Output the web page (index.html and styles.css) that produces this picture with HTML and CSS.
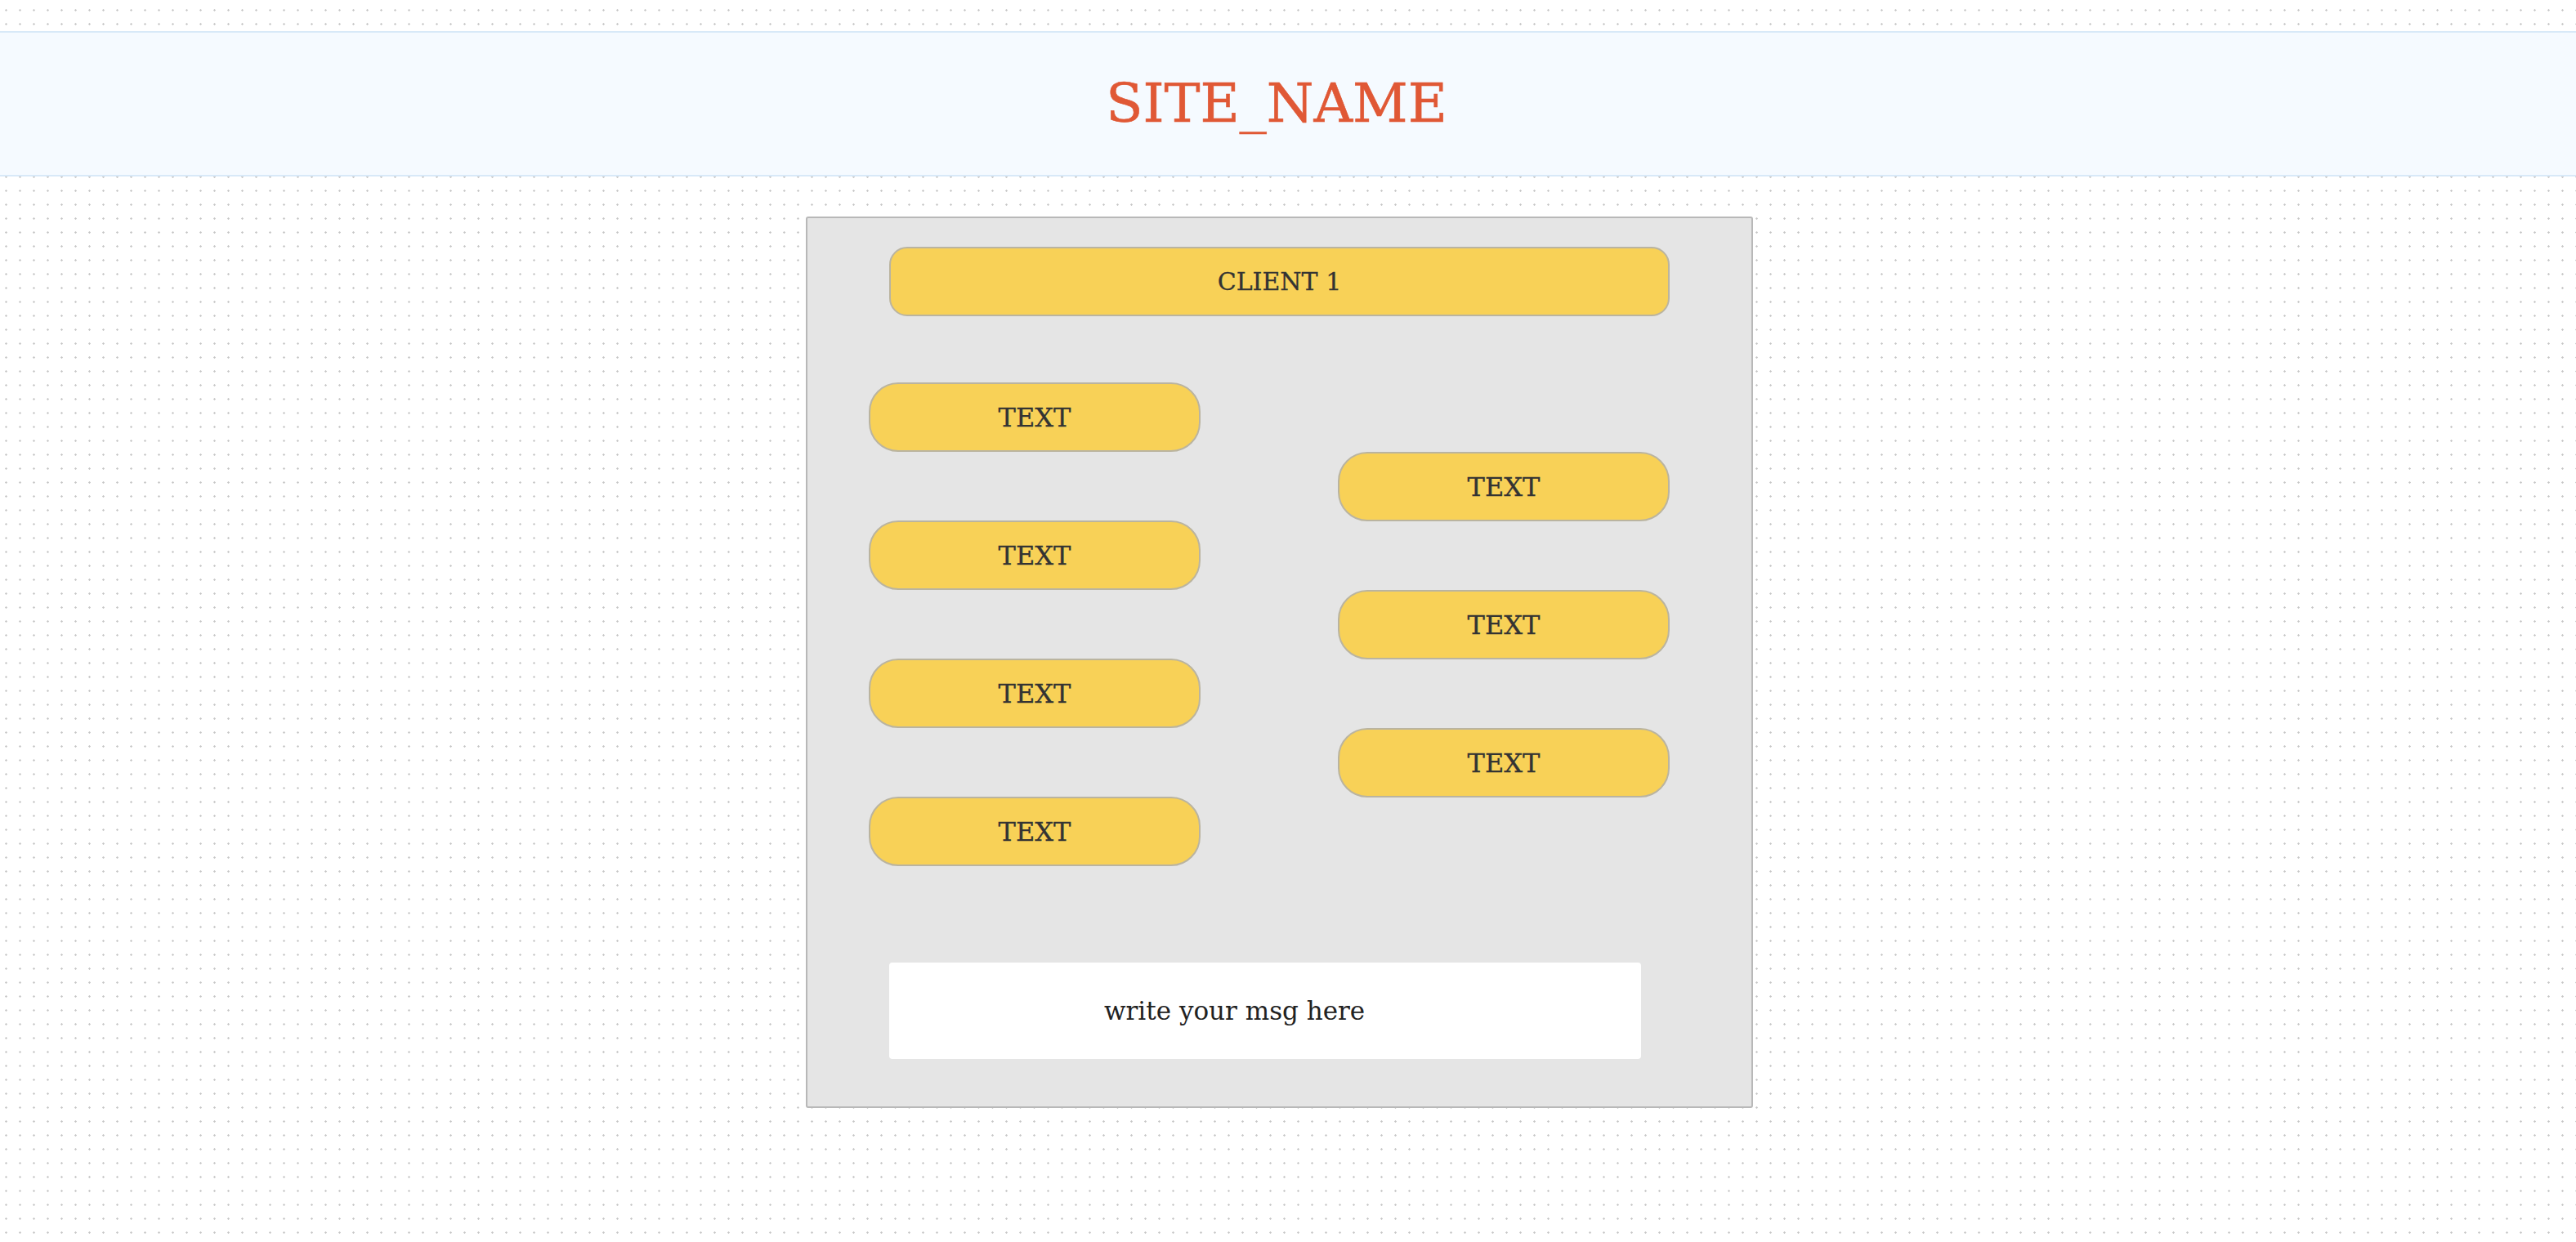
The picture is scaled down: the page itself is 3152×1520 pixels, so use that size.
FILE: index.html
```html
<!DOCTYPE html>
<html lang="en">
<head>
<meta charset="utf-8">
<title>SITE_NAME</title>
<link rel="stylesheet" href="styles.css">
</head>
<body>
<header class="site-header">
  <h1 class="site-title">SITE_NAME</h1>
</header>
<main class="page">
  <section class="chat-panel">
    <div class="client-bar">CLIENT 1</div>
    <div class="messages">
      <div class="msg-col msg-col-left">
        <div class="bubble">TEXT</div>
        <div class="bubble">TEXT</div>
        <div class="bubble">TEXT</div>
        <div class="bubble">TEXT</div>
      </div>
      <div class="msg-col msg-col-right">
        <div class="bubble">TEXT</div>
        <div class="bubble">TEXT</div>
        <div class="bubble">TEXT</div>
      </div>
    </div>
    <div class="composer">
      <input class="msg-input" type="text" placeholder="write your msg here">
    </div>
  </section>
</main>
</body>
</html>
```

FILE: styles.css
```css
* {
  box-sizing: border-box;
}

html,
body {
  margin: 0;
  padding: 0;
}

body {
  min-height: 1520px;
  padding-top: 38px;
  font-family: "DejaVu Serif", "Liberation Serif", serif;
  background-color: #ffffff;
  background-image: radial-gradient(circle, #c6c6c6 0, #c6c6c6 0.9px, rgba(255, 255, 255, 0) 1.5px);
  background-size: 17px 17px;
  background-position: -1px 4px;
}

.site-header {
  height: 178px;
  border-top: 2px solid #d8e9f8;
  border-bottom: 2px solid #d8e9f8;
  background: #f5faff;
  display: flex;
  align-items: center;
  justify-content: center;
  padding-right: 28px;
}

.site-title {
  margin: 0;
  font-size: 66px;
  font-weight: normal;
  line-height: 1;
  color: #e05835;
  -webkit-text-stroke: 0.6px #e05835;
}

.page {
  padding-right: 21px;
  padding-top: 49px;
}

.chat-panel {
  width: 1159px;
  margin: 0 auto;
  background: #e5e5e5;
  border: 2px solid #b8b8b8;
  border-radius: 3px;
  padding: 35px 0 58px;
}

.client-bar {
  width: 955px;
  height: 85px;
  margin: 0 auto;
  display: flex;
  align-items: center;
  justify-content: center;
  background: #f8d157;
  border: 2px solid #bab4a0;
  border-radius: 22px;
  font-size: 30px;
  color: #333333;
  -webkit-text-stroke: 0.3px #333333;
}

.messages {
  display: flex;
  justify-content: space-between;
  align-items: flex-start;
  padding: 0 100px 0 75px;
  margin-top: 81px;
}

.msg-col {
  display: flex;
  flex-direction: column;
  gap: 84px;
}

.msg-col-right {
  margin-top: 85px;
}

.bubble {
  width: 406px;
  height: 85px;
  display: flex;
  align-items: center;
  justify-content: center;
  background: #f8d157;
  border: 2px solid #bab4a0;
  border-radius: 36px;
  font-size: 32px;
  color: #333333;
  -webkit-text-stroke: 0.3px #333333;
}

.composer {
  margin-top: 118px;
  padding-left: 100px;
}

.msg-input {
  display: block;
  width: 920px;
  height: 118px;
  border: none;
  outline: none;
  border-radius: 4px;
  background: #ffffff;
  padding: 0 0 0 263px;
  font-family: "DejaVu Serif", "Liberation Serif", serif;
  font-size: 31px;
  color: #222222;
}

.msg-input::placeholder {
  color: #222222;
  opacity: 1;
}
```
